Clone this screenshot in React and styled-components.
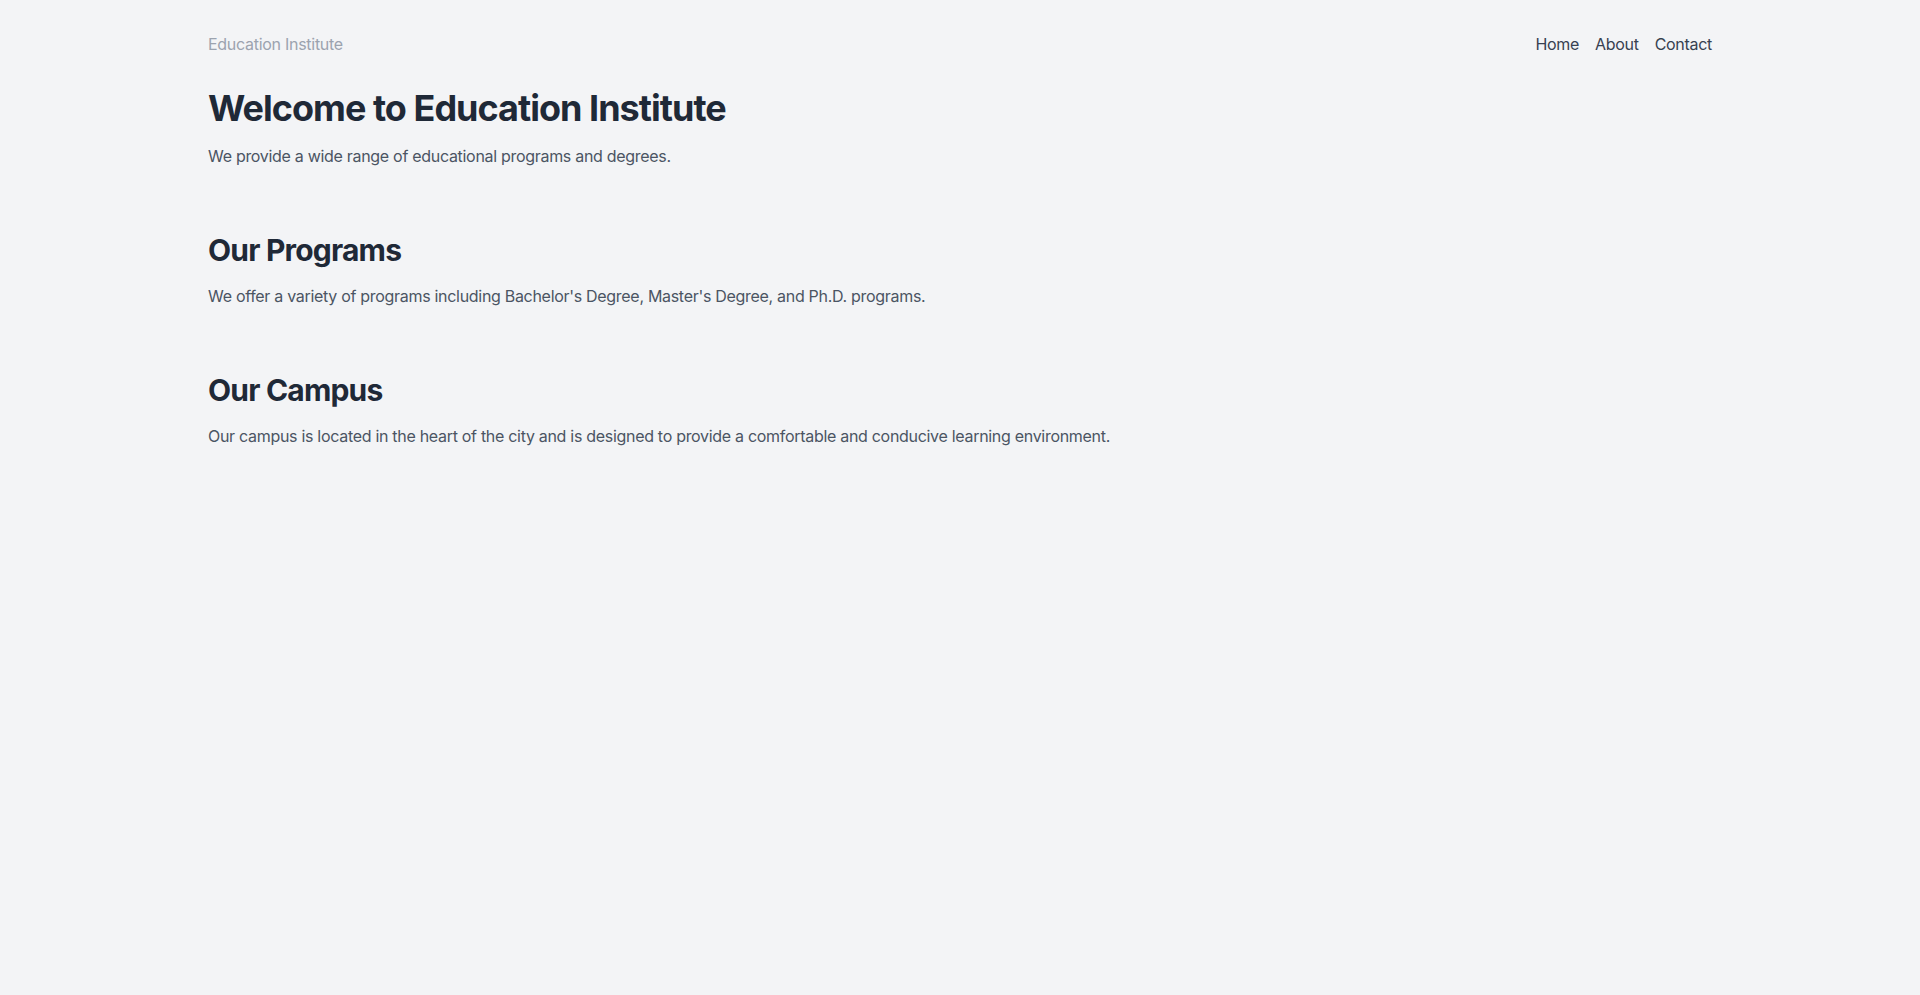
import styled, { createGlobalStyle } from "styled-components"

const GlobalStyle = createGlobalStyle`
    * {
        box-sizing: border-box;
    }
    body {
        margin: 0;
        background: #f3f4f6;
        font-family: Inter, "Noto Sans", sans-serif;
        -webkit-font-smoothing: antialiased;
    }
`

const sections = [
    {
        title: "Our Programs",
        text: "We offer a variety of programs including Bachelor's Degree, Master's Degree, and Ph.D. programs.",
    },
    {
        title: "Our Campus",
        text: "Our campus is located in the heart of the city and is designed to provide a comfortable and conducive learning environment.",
    },
]

const App = () => {
    return (
        <PAGE>
            <GlobalStyle />
            <CONTAINER>
                <HEADER>
                    <BRAND>Education Institute</BRAND>
                    <NAV>
                        <LINK href="#">Home</LINK>
                        <LINK href="#">About</LINK>
                        <LINK href="#">Contact</LINK>
                    </NAV>
                </HEADER>
                <HERO>
                    <H1>Welcome to Education Institute</H1>
                    <P>We provide a wide range of educational programs and degrees.</P>
                </HERO>
                {sections.map((s) => (
                    <SECTION key={s.title}>
                        <H2>{s.title}</H2>
                        <P>{s.text}</P>
                    </SECTION>
                ))}
            </CONTAINER>
        </PAGE>
    )
}

// styled components

const PAGE = styled.div`
    min-height: 100vh;
    background: #f3f4f6;
`
const CONTAINER = styled.div`
    max-width: 1536px;
    margin: 0 auto;
    padding: 0 16px;
`
const HEADER = styled.header`
    display: flex;
    justify-content: space-between;
    align-items: center;
    padding: 32px 0;
`
const BRAND = styled.div`
    font-size: 16px;
    line-height: 24px;
    letter-spacing: -0.28px;
    color: #9ca3af;
`
const NAV = styled.nav`
    display: flex;
    gap: 16px;
`
const LINK = styled.a`
    font-size: 16px;
    line-height: 24px;
    letter-spacing: -0.3px;
    color: #374151;
    text-decoration: none;
`
const HERO = styled.section`
    display: flex;
    flex-direction: column;
    gap: 16px;
`
const SECTION = styled(HERO)`
    margin-top: 64px;
`
const H1 = styled.h1`
    margin: 0;
    font-size: 36px;
    line-height: 40px;
    font-weight: 700;
    letter-spacing: -0.98px;
    color: #1f2937;
`
const H2 = styled.h2`
    margin: 0;
    font-size: 30px;
    line-height: 36px;
    font-weight: 700;
    letter-spacing: -0.8px;
    color: #1f2937;
`
const P = styled.p`
    margin: 0;
    font-size: 16px;
    line-height: 24px;
    letter-spacing: -0.3px;
    color: #4b5563;
`

export default App
